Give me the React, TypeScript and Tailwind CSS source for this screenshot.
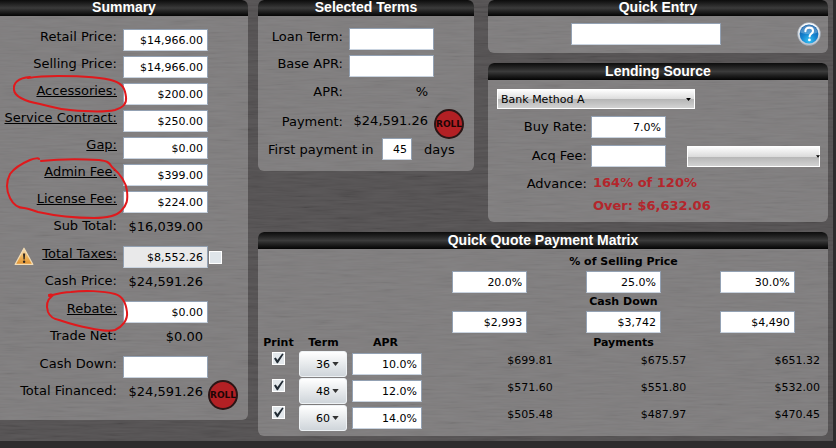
import type { ReactNode } from "react";

const TEXT = "font-['DejaVu_Sans',Verdana,sans-serif]";
const FIELD =
  "block h-[22px] rounded-none border border-[#93a1b3] border-b-[#c9d3df] px-1 pt-px text-right text-[11px] leading-none text-black outline-none";

function Panel({ title, cut, className = "", children }: { title: string; cut?: boolean; className?: string; children: ReactNode }) {
  return (
    <section className={`overflow-hidden rounded-md bg-white/25 ${className}`}>
      <h2
        className={`bg-linear-to-b from-[#0c0c0c] via-[#3b3b3b] to-[#050505] text-center font-['Liberation_Sans',Arial,sans-serif] text-[14px] font-bold text-white ${
          cut ? "h-4 leading-[15px]" : "h-[17px] leading-[17px]"
        }`}
      >
        {title}
      </h2>
      {children}
    </section>
  );
}

function Roll({ name, className = "" }: { name: string; className?: string }) {
  return (
    <button
      type="button"
      aria-label={name}
      className={`flex size-[30px] shrink-0 items-center justify-center rounded-full border-2 border-[#2b1515] bg-[#b32024] text-[9px] font-bold text-[#1c0606] ${className}`}
    >
      ROLL
    </button>
  );
}

function Tri({ className = "" }: { className?: string }) {
  return (
    <svg viewBox="0 0 8 5" className={`pointer-events-none absolute ${className}`} aria-hidden="true">
      <path d="M0 0h8L4 5z" fill="currentColor" />
    </svg>
  );
}

function Warning() {
  return (
    <svg viewBox="0 0 20 19" className="mt-[2px] mr-2 h-[19px] w-5 shrink-0" aria-hidden="true">
      <defs>
        <linearGradient id="warn" x1="0" y1="0" x2="0" y2="1">
          <stop offset="0" stopColor="#f6e3c3" />
          <stop offset="0.55" stopColor="#eeb45c" />
          <stop offset="1" stopColor="#e08f2c" />
        </linearGradient>
      </defs>
      <path d="M10 1.2 18.8 17.4H1.2z" fill="url(#warn)" stroke="#f3dcb4" strokeWidth="1.2" strokeLinejoin="round" />
      <path d="M9 6.5h2.2l-.5 6H9.5z" fill="#2c2622" />
      <circle cx="10.1" cy="14.8" r="1.2" fill="#2c2622" />
    </svg>
  );
}

function Help() {
  return (
    <svg viewBox="0 0 24 24" className="size-6" aria-hidden="true">
      <defs>
        <radialGradient id="help" cx="0.5" cy="0.85" r="0.8">
          <stop offset="0" stopColor="#35c3f5" />
          <stop offset="0.5" stopColor="#1583cf" />
          <stop offset="1" stopColor="#0d5ba6" />
        </radialGradient>
        <linearGradient id="ring" x1="0" y1="0" x2="0" y2="1">
          <stop offset="0" stopColor="#ffffff" />
          <stop offset="1" stopColor="#b9c3cf" />
        </linearGradient>
      </defs>
      <circle cx="12" cy="12" r="11.5" fill="url(#ring)" stroke="#8d97a3" strokeWidth="0.6" />
      <circle cx="12" cy="12" r="9.4" fill="url(#help)" />
      <path d="M3.4 10.5a8.7 8.7 0 0 1 17.2 0c-5 2.2-11 2.4-17.2 0z" fill="#fff" opacity="0.25" />
      <path d="M8.4 9.3c0-2.4 1.6-3.7 3.8-3.7 2.3 0 3.8 1.3 3.8 3.3 0 2.8-3.4 3-3.4 5.6" fill="none" stroke="#fff" strokeWidth="2.1" strokeLinecap="round" />
      <circle cx="12.4" cy="17.9" r="1.4" fill="#fff" />
    </svg>
  );
}

type SummaryRow = { label: string; value: string; field?: boolean; link?: boolean; kind?: "taxes" | "financed" };

const SUMMARY: SummaryRow[] = [
  { label: "Retail Price:", value: "$14,966.00", field: true },
  { label: "Selling Price:", value: "$14,966.00", field: true },
  { label: "Accessories:", value: "$200.00", field: true, link: true },
  { label: "Service Contract:", value: "$250.00", field: true, link: true },
  { label: "Gap:", value: "$0.00", field: true, link: true },
  { label: "Admin Fee:", value: "$399.00", field: true, link: true },
  { label: "License Fee:", value: "$224.00", field: true, link: true },
  { label: "Sub Total:", value: "$16,039.00" },
  { label: "Total Taxes:", value: "$8,552.26", field: true, link: true, kind: "taxes" },
  { label: "Cash Price:", value: "$24,591.26" },
  { label: "Rebate:", value: "$0.00", field: true, link: true },
  { label: "Trade Net:", value: "$0.00" },
  { label: "Cash Down:", value: "", field: true },
  { label: "Total Financed:", value: "$24,591.26", kind: "financed" },
];

function Summary() {
  return (
    <Panel title="Summary" cut className="w-[248px] shrink-0 self-start rounded-l-none">
      <div className="pt-3 pb-[10px]">
        {SUMMARY.map((row, i) => (
          <div key={row.label} className={`flex items-start ${row.field ? "h-[27px]" : "h-7"}`}>
            <div className="flex w-[117px] shrink-0 justify-end whitespace-nowrap">
              {row.kind === "taxes" && <Warning />}
              {row.field ? (
                <label htmlFor={`sum-${i}`}>
                  {row.link ? (
                    <a href="#" className="underline">
                      {row.label}
                    </a>
                  ) : (
                    row.label
                  )}
                </label>
              ) : (
                <span>{row.label}</span>
              )}
            </div>
            {row.field ? (
              <input
                id={`sum-${i}`}
                defaultValue={row.value}
                className={`${FIELD} mt-px ml-[6px] w-[85px] ${row.kind === "taxes" ? "bg-[#e9e9ea]" : "bg-white"}`}
              />
            ) : (
              <span className="mt-px ml-[6px] w-[80px] text-right">{row.value}</span>
            )}
            {row.kind === "taxes" && (
              <input
                type="checkbox"
                aria-label="Override taxes"
                className="mt-[6px] ml-px size-[13px] appearance-none border border-white bg-[#dfe5ea]"
              />
            )}
            {row.kind === "financed" && <Roll name="Roll total financed" className="-mt-[2px] ml-[5px]" />}
          </div>
        ))}
      </div>
    </Panel>
  );
}

function SelectedTerms() {
  return (
    <Panel title="Selected Terms" cut className="w-[216px] shrink-0 self-start">
      <div className="pt-3">
        <div className="flex h-[27px] items-start">
          <label htmlFor="term" className="w-[85px] text-right">Loan Term:</label>
          <input id="term" className={`${FIELD} ml-[6px] w-[85px] bg-white`} />
        </div>
        <div className="flex h-7 items-start">
          <label htmlFor="base" className="w-[85px] text-right">Base APR:</label>
          <input id="base" className={`${FIELD} ml-[6px] w-[85px] bg-white`} />
        </div>
        <div className="flex h-[30px] items-start">
          <span className="w-[85px] text-right">APR:</span>
          <span className="w-[85px] text-right">%</span>
        </div>
        <div className="flex h-7 items-start">
          <span className="w-[85px] text-right">Payment:</span>
          <span className="-mt-px w-[85px] text-right">$24,591.26</span>
          <Roll name="Roll payment" className="-mt-1 ml-[6px]" />
        </div>
        <div className="flex h-[30px] items-start pl-[10px]">
          <label htmlFor="days" className="w-[114px] whitespace-nowrap">First payment in</label>
          <input id="days" defaultValue="45" className={`${FIELD} -mt-[3px] w-[30px] bg-white`} />
          <span className="ml-3">days</span>
        </div>
      </div>
    </Panel>
  );
}

function QuickEntry() {
  return (
    <Panel title="Quick Entry" cut>
      <div className="flex h-[37px] items-start pt-[7px] pr-[7px] pl-[83px]">
        <input aria-label="Quick Entry" className={`${FIELD} w-[150px] bg-white`} />
        <button type="button" aria-label="Help" className="-mt-px ml-auto">
          <Help />
        </button>
      </div>
    </Panel>
  );
}

const COMBO =
  "block w-full appearance-none rounded-none border border-white bg-[linear-gradient(#fdfdfd,#dcdcdc_50%,#b5b5b5_51%,#d2d2d2)] pl-[3px] text-[11px] leading-none text-black outline-none";

function LendingSource() {
  return (
    <Panel title="Lending Source">
      <div className="h-[142px] pt-[9px]">
        <div className="relative ml-[9px] w-[198px]">
          <select aria-label="Lending Source" className={`${COMBO} h-5`}>
            <option>Bank Method A</option>
          </select>
          <Tri className="top-[9px] right-1 h-[3px] w-[5px] text-black" />
        </div>
        <div className="mt-[9px] flex h-[29px] items-start">
          <label htmlFor="buy" className="w-[99px] text-right">Buy Rate:</label>
          <input id="buy" defaultValue="7.0%" className={`${FIELD} -mt-[2px] ml-1 w-[75px] bg-white`} />
        </div>
        <div className="flex h-7 items-start">
          <label htmlFor="acq" className="w-[99px] text-right">Acq Fee:</label>
          <input id="acq" className={`${FIELD} -mt-[2px] ml-1 w-[75px] bg-white`} />
          <div className="relative -mt-px ml-[21px] w-[133px]">
            <select aria-label="Acq Fee type" className={`${COMBO} h-[21px]`}>
              <option></option>
            </select>
            <Tri className="top-[9px] right-0 h-[3px] w-1 text-black" />
          </div>
        </div>
        <div className="flex items-start">
          <span className="w-[99px] text-right">Advance:</span>
          <div className="-mt-px ml-[6px] font-bold text-[#b3262c]">
            <p>164% of 120%</p>
            <p className="mt-[5px]">Over: $6,632.06</p>
          </div>
        </div>
      </div>
    </Panel>
  );
}

const MATRIX = [
  { term: "36", apr: "10.0%", pay: ["$699.81", "$675.57", "$651.32"] },
  { term: "48", apr: "12.0%", pay: ["$571.60", "$551.80", "$532.00"] },
  { term: "60", apr: "14.0%", pay: ["$505.48", "$487.97", "$470.45"] },
];

function FieldRow({ name, values }: { name: string; values: string[] }) {
  return (
    <tr className="h-6">
      <td colSpan={3}></td>
      {values.map((v, i) => (
        <td key={v}>
          <input aria-label={`${name} ${i + 1}`} defaultValue={v} className={`${FIELD} mx-auto w-[75px] bg-white`} />
        </td>
      ))}
    </tr>
  );
}

function Matrix() {
  return (
    <Panel title="Quick Quote Payment Matrix">
      <div className="pt-[5px] pr-1 pb-1">
        <table className="w-full table-fixed border-collapse text-[11px] leading-4">
          <colgroup>
            <col className="w-[41px]" />
            <col className="w-[49px]" />
            <col className="w-[75px]" />
            <col />
            <col />
            <col />
          </colgroup>
          <tbody>
            <tr className="h-4">
              <td colSpan={3}></td>
              <th colSpan={3}>% of Selling Price</th>
            </tr>
            <FieldRow name="Percent of selling price" values={["20.0%", "25.0%", "30.0%"]} />
            <tr className="h-4">
              <td colSpan={3}></td>
              <th colSpan={3}>Cash Down</th>
            </tr>
            <FieldRow name="Cash down" values={["$2,993", "$3,742", "$4,490"]} />
            <tr className="h-[17px]">
              <th>Print</th>
              <th>Term</th>
              <th>APR</th>
              <th colSpan={3}>Payments</th>
            </tr>
            {MATRIX.map((row) => (
              <tr key={row.term} className="h-[27px]">
                <td className="align-top">
                  <div className="relative mx-auto mt-px size-[13px]">
                    <input
                      type="checkbox"
                      defaultChecked
                      aria-label={`Print ${row.term}`}
                      className="block size-[13px] appearance-none border border-white bg-[#e3e8ec]"
                    />
                    <svg viewBox="0 0 13 13" className="pointer-events-none absolute inset-0" aria-hidden="true">
                      <path d="M2 6.6 3.8 5.6 5.4 8 10.2 1.6 11.6 2.2 5.9 11.2H4.9z" fill="#222c35" />
                    </svg>
                  </div>
                </td>
                <td className="align-top">
                  <div className="relative w-12">
                    <select
                      aria-label={`Term ${row.term}`}
                      defaultValue={row.term}
                      className="block h-[26px] w-12 appearance-none rounded-[3px] border border-[#eef2f5] bg-linear-to-b from-white to-[#cfd5da] pl-4 text-[11px] leading-none text-black outline-none"
                    >
                      <option>36</option>
                      <option>48</option>
                      <option>60</option>
                    </select>
                    <Tri className="top-[11px] right-2 h-1 w-[7px] text-[#333]" />
                  </div>
                </td>
                <td className="pt-[2px] pr-px align-top">
                  <input aria-label={`APR ${row.term}`} defaultValue={row.apr} className={`${FIELD} ml-auto w-[70px] bg-white`} />
                </td>
                {row.pay.map((p) => (
                  <td key={p} className="pt-[2px] pr-1 text-right align-top">
                    {p}
                  </td>
                ))}
              </tr>
            ))}
          </tbody>
        </table>
      </div>
    </Panel>
  );
}

function Marks() {
  return (
    <svg
      viewBox="0 0 140 340"
      className="pointer-events-none absolute top-0 left-0 h-[340px] w-[140px]"
      fill="none"
      stroke="#e0191c"
      strokeWidth="2"
      strokeLinecap="round"
      aria-hidden="true"
    >
      <path d="M30 77C18 78 13 83 14 90c1 7 10 11 26 14 10 2 16 5 30 6 22 2 36 2 45 0 7-2 12-6 11-13-1-8-3-13-12-16-12-4-38-5-56-5-12 0-24 1-30 2" />
      <path d="M41 161c18-2 40-2 58-1 8 1 10 2 13 7 7 6 14 14 15 24 1 9 0 14-6 20-5 5-13 7-27 7-20 0-38-2-56-6-7-2-11-4-14-4-6 0-11-4-14-10-4-8-4-16 0-24 5-7 13-11 20-14 5-2 9-2 9-1" />
      <path d="M49 295c2-1 5 0 3 1-5 4-6 10-4 16 2 5 6 7 11 8 9 3 18 6 30 8 9 2 20 4 26 2 7-3 13-10 12-18-1-8-4-16-12-18-12-3-30-4-44-2-8 0-15 2-22 4" />
    </svg>
  );
}

export default function App() {
  return (
    <main className={`min-h-screen bg-[#2e2c2d] pr-[3px] text-[13px] leading-[18px] text-black ${TEXT}`}>
      <div className="relative isolate bg-[#524f50]">
        <svg className="absolute inset-0 -z-10 h-full w-full opacity-[0.08]" aria-hidden="true">
          <filter id="brushed" x="0" y="0" width="100%" height="100%">
            <feTurbulence type="fractalNoise" baseFrequency="0.03 0.45" numOctaves="3" seed="4" />
            <feColorMatrix values="0.9 0 0 0 -0.12  0.9 0 0 0 -0.12  0.9 0 0 0 -0.12  0 0 0 0 1" />
          </filter>
          <rect width="100%" height="100%" filter="url(#brushed)" />
        </svg>
        <div className="flex gap-[10px] pr-[5px] pb-[5px]">
          <Summary />
          <div className="flex min-w-0 flex-1 flex-col gap-[10px]">
            <div className="flex gap-[14px]">
              <SelectedTerms />
              <div className="flex min-w-0 flex-1 flex-col gap-[10px]">
                <QuickEntry />
                <LendingSource />
              </div>
            </div>
            <Matrix />
          </div>
        </div>
        <Marks />
      </div>
    </main>
  );
}
